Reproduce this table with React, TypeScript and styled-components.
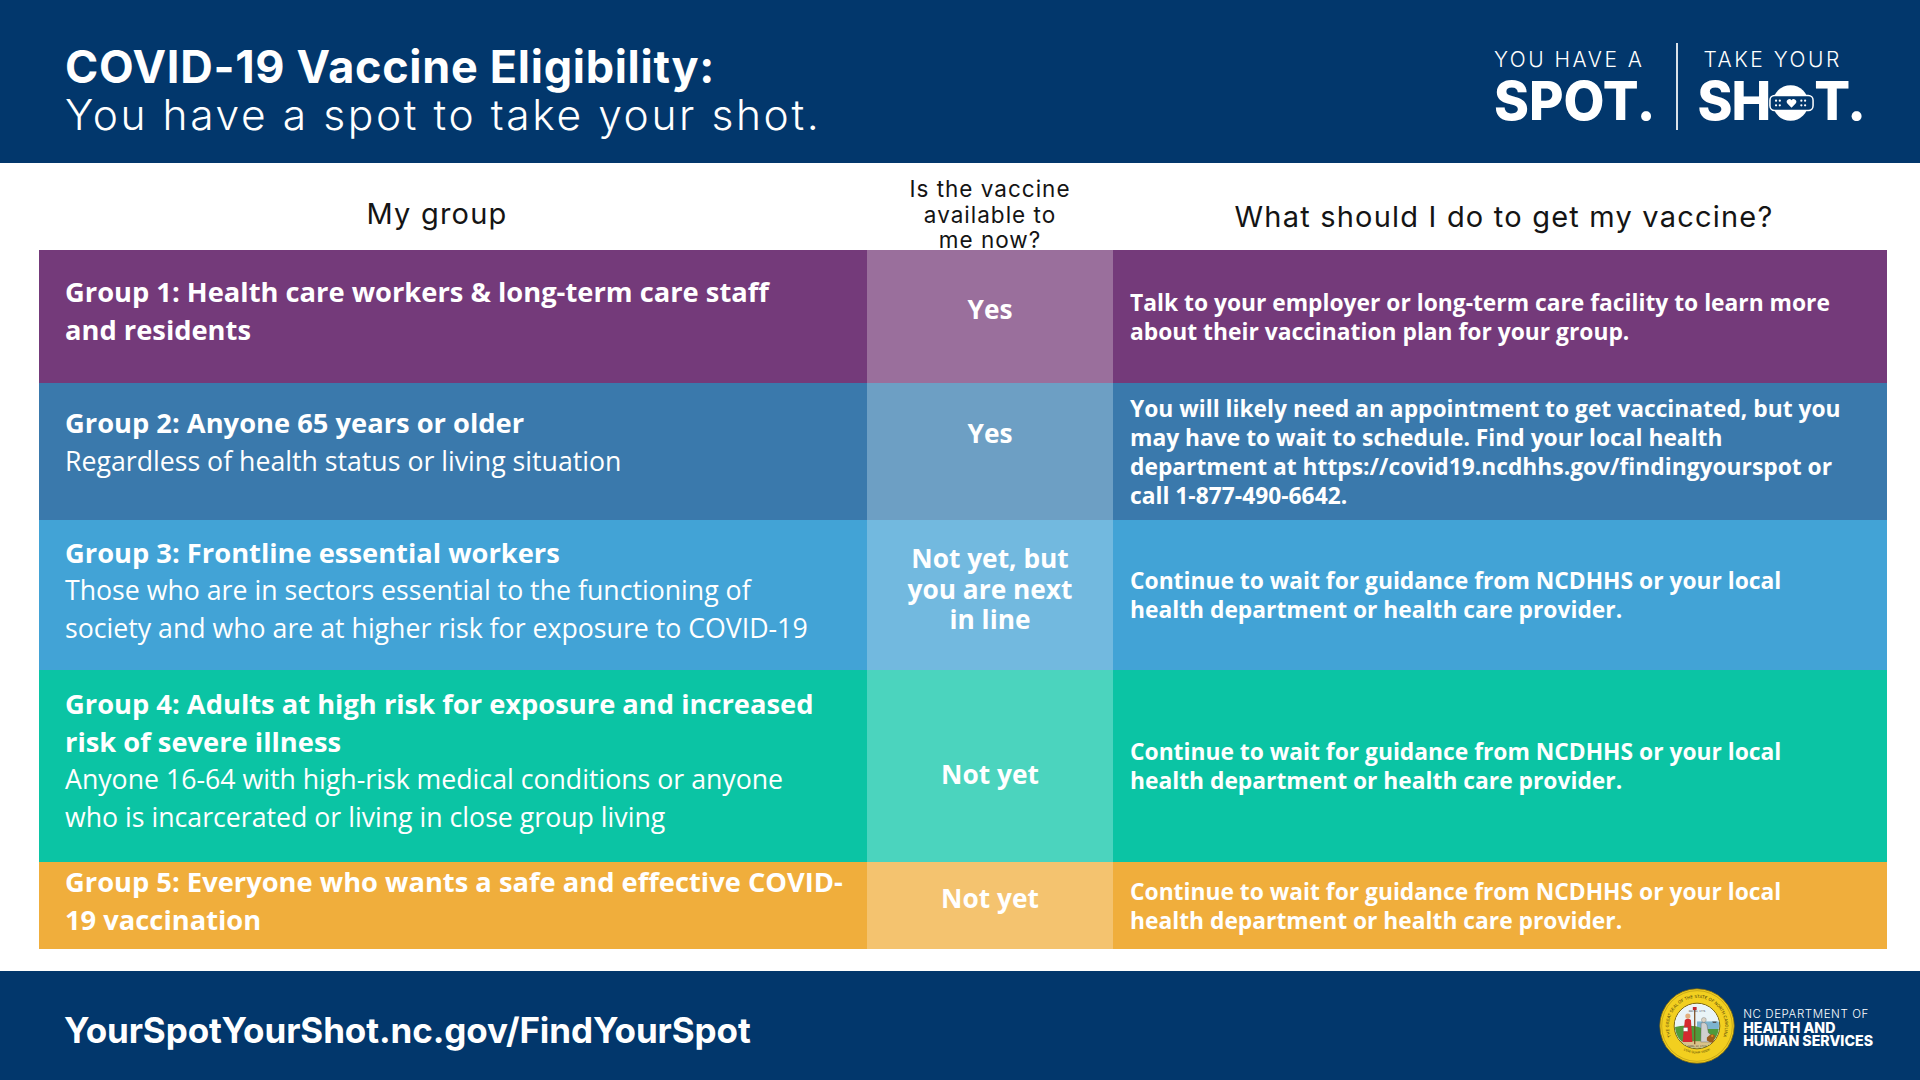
import React from "react";
import styled, { createGlobalStyle } from "styled-components";

const NAVY = "#02376c";

const GlobalStyle = createGlobalStyle`
  html, body { margin: 0; padding: 0; background: #ffffff; }
  body { width: 1920px; height: 1080px; overflow: hidden; }
  * { box-sizing: border-box; }
`;

const Page = styled.div`
  width: 1920px;
  height: 1080px;
  display: flex;
  flex-direction: column;
  background: #ffffff;
`;

const TopBar = styled.header`
  height: 163px;
  flex: none;
  background: ${NAVY};
  display: flex;
  justify-content: space-between;
  align-items: flex-start;
  padding: 0 55px 0 65px;
  color: #ffffff;
  font-family: Inter, "Noto Sans", sans-serif;
`;

const TitleBlock = styled.div`
  padding-top: 43px;
  display: flex;
  flex-direction: column;
`;

const TitleMain = styled.div`
  font-size: 45px;
  font-weight: 700;
  line-height: 47px;
  letter-spacing: 0.7px;
`;

const TitleSub = styled.div`
  font-size: 42.5px;
  font-weight: 300;
  line-height: 49px;
  letter-spacing: 2.6px;
`;

const Brand = styled.div`
  margin-top: 43px;
  height: 87px;
  display: flex;
  align-items: stretch;
`;

const BrandCol = styled.div`
  padding-top: 6px;
  display: flex;
  flex-direction: column;
  gap: 5px;
`;

const BrandDivider = styled.div`
  width: 2px;
  background: rgba(255, 255, 255, 0.85);
  margin: 0 20px 0 20px;
`;

const BrandSmall = styled.div<{ $indent?: number }>`
  font-size: 21px;
  font-weight: 300;
  line-height: 21px;
  letter-spacing: 2.5px;
  white-space: nowrap;
  padding-left: ${(p) => p.$indent ?? 0}px;
`;

const BrandBig = styled.div<{ $ls: number }>`
  font-size: 53px;
  font-weight: 800;
  line-height: 52px;
  letter-spacing: ${(p) => p.$ls}px;
  white-space: nowrap;
  display: flex;
  align-items: flex-end;
`;

const BandageSvg = styled.svg`
  width: 45px;
  height: 40px;
  margin: 0 0 4px -1px;
  flex: none;
`;

const Bandage = () => (
  <BandageSvg viewBox="0 0 48 40" aria-hidden="true">
    <circle cx="23" cy="20" r="19" fill="#ffffff" />
    <rect x="1" y="12" width="46" height="16" rx="5" fill={NAVY} stroke="#ffffff" strokeWidth="1.6" />
    {[7.5, 11.5, 34.5, 38.5].map((x) =>
      [17.5, 22.5].map((y) => <circle key={`${x}-${y}`} cx={x} cy={y} r="1.2" fill="#ffffff" />)
    )}
    <path d="M24 25 L19.6 20.6 A2.5 2.5 0 0 1 24 17 A2.5 2.5 0 0 1 28.4 20.6 Z" fill="#ffffff" />
  </BandageSvg>
);

const TableWrap = styled.main`
  flex: none;
  padding: 0 33px 0 39px;
  display: flex;
  flex-direction: column;
`;

const Grid = styled.div<{ $h: number }>`
  display: grid;
  grid-template-columns: 828px 246px 1fr;
  height: ${(p) => p.$h}px;
`;

const HeadCell = styled.div<{ $pt: number; $pl?: number; $pr?: number }>`
  display: flex;
  align-items: center;
  justify-content: center;
  padding-top: ${(p) => p.$pt}px;
  padding-left: ${(p) => p.$pl ?? 0}px;
  padding-right: ${(p) => p.$pr ?? 0}px;
  font-family: Inter, "Noto Sans", sans-serif;
  font-size: 29px;
  font-weight: 400;
  color: #141414;
  letter-spacing: 1.2px;
  white-space: nowrap;
`;

const HeadSmall = styled.div`
  padding-top: 13px;
  text-align: center;
  font-family: Inter, "Noto Sans", sans-serif;
  font-size: 22.5px;
  line-height: 25.5px;
  font-weight: 400;
  color: #141414;
  letter-spacing: 1px;
  white-space: nowrap;
`;

const shiftPad = (off: number) =>
  off >= 0 ? `padding-top: ${off * 2}px; padding-bottom: 0;` : `padding-top: 0; padding-bottom: ${-off * 2}px;`;

const GroupCell = styled.div<{ $bg: string; $off: number }>`
  background: ${(p) => p.$bg};
  display: flex;
  flex-direction: column;
  justify-content: center;
  padding-left: 26px;
  padding-right: 6px;
  ${(p) => shiftPad(p.$off)}
  color: #ffffff;
  font-family: "Open Sans", "Noto Sans", sans-serif;
  line-height: 37.5px;
  white-space: nowrap;
`;

const GroupTitle = styled.div`
  font-size: 27.3px;
  font-weight: 700;
`;

const GroupDesc = styled.div`
  font-size: 26.7px;
  font-weight: 400;
`;

const AnswerCell = styled.div<{ $bg: string; $off: number }>`
  background: ${(p) => p.$bg};
  display: flex;
  align-items: center;
  justify-content: center;
  text-align: center;
  ${(p) => shiftPad(p.$off)}
  color: #ffffff;
  font-family: "Open Sans", "Noto Sans", sans-serif;
  font-size: 26.3px;
  line-height: 30.6px;
  font-weight: 700;
  white-space: nowrap;
`;

const ActionCell = styled.div<{ $bg: string }>`
  background: ${(p) => p.$bg};
  display: flex;
  flex-direction: column;
  justify-content: center;
  padding-left: 17px;
  color: #ffffff;
  font-family: "Open Sans", "Noto Sans", sans-serif;
  font-size: 22.8px;
  line-height: 29px;
  font-weight: 700;
  white-space: nowrap;
`;

const Spacer = styled.div`
  height: 22px;
  flex: none;
`;

const Footer = styled.footer`
  height: 109px;
  flex: none;
  background: ${NAVY};
  display: flex;
  align-items: center;
  justify-content: space-between;
  padding: 0 47px 0 64px;
  color: #ffffff;
`;

const FooterLink = styled.div`
  padding-top: 8px;
  font-family: Inter, "Noto Sans", sans-serif;
  font-size: 35px;
  font-weight: 700;
  letter-spacing: -0.1px;
`;

const Dept = styled.div`
  display: flex;
  align-items: center;
  gap: 8px;
`;

const SealSvg = styled.svg`
  width: 76px;
  height: 76px;
  flex: none;
`;

const DeptText = styled.div`
  display: flex;
  flex-direction: column;
  font-family: Inter, "Noto Sans", sans-serif;
  padding-top: 2px;
`;

const DeptSmall = styled.div`
  font-size: 11.5px;
  font-weight: 300;
  line-height: 14px;
  letter-spacing: 0.6px;
`;

const DeptBig = styled.div`
  font-size: 14.2px;
  font-weight: 800;
  line-height: 13px;
  letter-spacing: 0px;
`;

const Seal = () => (
  <SealSvg viewBox="0 0 100 100" aria-hidden="true">
    <defs>
      <path id="sealRing" d="M 21.7 73.8 A 37 37 0 1 1 78.3 73.8" />
      <path id="sealBottom" d="M 30 80 A 36 36 0 0 0 70 80" />
      <clipPath id="sealInner">
        <circle cx="50" cy="50" r="29" />
      </clipPath>
    </defs>
    <circle cx="50" cy="50" r="49" fill="#f2cf1f" stroke="#7a6412" strokeWidth="1" />
    <circle cx="50" cy="50" r="46.5" fill="none" stroke="#9a7d12" strokeWidth="0.6" />
    <text fontFamily="'DejaVu Sans', sans-serif" fontSize="5.4" fill="#4a3c08">
      <textPath href="#sealRing" startOffset="50%" textAnchor="middle">
        THE GREAT SEAL OF THE STATE OF NORTH CAROLINA
      </textPath>
    </text>
    <text fontFamily="'DejaVu Sans', sans-serif" fontSize="3.8" fill="#4a3c08">
      <textPath href="#sealBottom" startOffset="50%" textAnchor="middle">
        ESSE QUAM VIDERI
      </textPath>
    </text>
    <circle cx="50" cy="50" r="30" fill="#ffffff" stroke="#6b5a10" strokeWidth="1.2" />
    <g clipPath="url(#sealInner)">
      <rect x="18" y="18" width="64" height="34" fill="#e9f4f8" />
      <rect x="50" y="44" width="32" height="10" fill="#7db4cf" />
      <path d="M18 52 Q 40 46 60 54 L 82 54 L 82 82 L 18 82 Z" fill="#4f9a3c" />
      <path d="M70 44 l6 0 l-1 2 l-4 0 z" fill="#555" />
      <rect x="25" y="70" width="50" height="12" fill="#d9c28a" />
    </g>
    <line x1="47" y1="28" x2="47" y2="74" stroke="#7a4a1a" strokeWidth="1.6" />
    <path d="M44.5 25 h5 v4 h-5 z" fill="#c0282e" />
    <circle cx="38" cy="37" r="3.4" fill="#e2b07f" />
    <path d="M34 42 Q38 39 42 42 L44 71 L31 71 Z" fill="#d42a2f" />
    <rect x="32" y="52" width="6" height="5" fill="#ffffff" stroke="#555" strokeWidth="0.4" />
    <circle cx="59" cy="42" r="3.2" fill="#d9d2c4" stroke="#555" strokeWidth="0.4" />
    <path d="M55.5 46 Q60 44 63 48 L65 59 L70 63 L68 71 L55 71 Z" fill="#cfcfcf" stroke="#555" strokeWidth="0.5" />
    <path d="M63 65 Q70 58 74 63 L71 72 Q67 72 63 69 Z" fill="#9b5b1c" />
    <circle cx="70" cy="63" r="1.5" fill="#e38a1e" />
    <text x="50" y="32" textAnchor="middle" fontFamily="'DejaVu Sans', sans-serif" fontSize="3.2" fill="#333">
      MAY 20, 1775
    </text>
    <text x="50" y="77" textAnchor="middle" fontFamily="'DejaVu Sans', sans-serif" fontSize="3.2" fill="#333">
      APRIL 12, 1776
    </text>
  </SealSvg>
);

type RowData = {
  h: number;
  bg: string;
  mid: string;
  title: string[];
  desc: string[];
  answer: string[];
  action: string[];
  gOff: number;
  aOff: number;
};

const WAIT = ["Continue to wait for guidance from NCDHHS or your local", "health department or health care provider."];

const rows: RowData[] = [
  {
    h: 133,
    bg: "#743a7a",
    mid: "#9a6f9c",
    title: ["Group 1: Health care workers & long-term care staff", "and residents"],
    desc: [],
    answer: ["Yes"],
    action: ["Talk to your employer or long-term care facility to learn more", "about their vaccination plan for your group."],
    gOff: -6,
    aOff: -7,
  },
  {
    h: 137,
    bg: "#3a79ac",
    mid: "#6d9fc4",
    title: ["Group 2: Anyone 65 years or older"],
    desc: ["Regardless of health status or living situation"],
    answer: ["Yes"],
    action: [
      "You will likely need an appointment to get vaccinated, but you",
      "may have to wait to schedule. Find your local health",
      "department at https://covid19.ncdhhs.gov/findingyourspot or",
      "call 1-877-490-6642.",
    ],
    gOff: -10,
    aOff: -18,
  },
  {
    h: 150,
    bg: "#42a3d6",
    mid: "#72b9df",
    title: ["Group 3: Frontline essential workers"],
    desc: ["Those who are in sectors essential to the functioning of", "society and who are at higher risk for exposure to COVID-19"],
    answer: ["Not yet, but", "you are next", "in line"],
    action: WAIT,
    gOff: -5,
    aOff: -6,
  },
  {
    h: 192,
    bg: "#0bc4a4",
    mid: "#4bd4be",
    title: ["Group 4: Adults at high risk for exposure and increased", "risk of severe illness"],
    desc: ["Anyone 16-64 with high-risk medical conditions or anyone", "who is incarcerated or living in close group living"],
    answer: ["Not yet"],
    action: WAIT,
    gOff: -6,
    aOff: 8,
  },
  {
    h: 87,
    bg: "#f0ae3c",
    mid: "#f4c36f",
    title: ["Group 5: Everyone who wants a safe and effective COVID-", "19 vaccination"],
    desc: [],
    answer: ["Not yet"],
    action: WAIT,
    gOff: -5,
    aOff: -7,
  },
];

const Lines = ({ lines }: { lines: string[] }) => (
  <>
    {lines.map((l, i) => (
      <React.Fragment key={i}>
        {i > 0 && <br />}
        {l}
      </React.Fragment>
    ))}
  </>
);

export default function App() {
  return (
    <Page>
      <GlobalStyle />
      <TopBar>
        <TitleBlock>
          <TitleMain>COVID-19 Vaccine Eligibility:</TitleMain>
          <TitleSub>You have a spot to take your shot.</TitleSub>
        </TitleBlock>
        <Brand>
          <BrandCol>
            <BrandSmall>YOU HAVE A</BrandSmall>
            <BrandBig $ls={0}>SPOT.</BrandBig>
          </BrandCol>
          <BrandDivider />
          <BrandCol>
            <BrandSmall $indent={6}>TAKE YOUR</BrandSmall>
            <BrandBig $ls={-1}>
              SH
              <Bandage />
              T.
            </BrandBig>
          </BrandCol>
        </Brand>
      </TopBar>
      <TableWrap>
        <Grid $h={87}>
          <HeadCell $pt={12} $pr={32}>My group</HeadCell>
          <HeadSmall>
            Is the vaccine
            <br />
            available to
            <br />
            me now?
          </HeadSmall>
          <HeadCell $pt={18} $pl={8}>What should I do to get my vaccine?</HeadCell>
        </Grid>
        {rows.map((r, i) => (
          <Grid $h={r.h} key={i}>
            <GroupCell $bg={r.bg} $off={r.gOff}>
              <GroupTitle>
                <Lines lines={r.title} />
              </GroupTitle>
              {r.desc.length > 0 && (
                <GroupDesc>
                  <Lines lines={r.desc} />
                </GroupDesc>
              )}
            </GroupCell>
            <AnswerCell $bg={r.mid} $off={r.aOff}>
              <div>
                <Lines lines={r.answer} />
              </div>
            </AnswerCell>
            <ActionCell $bg={r.bg}>
              <div>
                <Lines lines={r.action} />
              </div>
            </ActionCell>
          </Grid>
        ))}
      </TableWrap>
      <Spacer />
      <Footer>
        <FooterLink>YourSpotYourShot.nc.gov/FindYourSpot</FooterLink>
        <Dept>
          <Seal />
          <DeptText>
            <DeptSmall>NC DEPARTMENT OF</DeptSmall>
            <DeptBig>HEALTH AND</DeptBig>
            <DeptBig>HUMAN SERVICES</DeptBig>
          </DeptText>
        </Dept>
      </Footer>
    </Page>
  );
}
